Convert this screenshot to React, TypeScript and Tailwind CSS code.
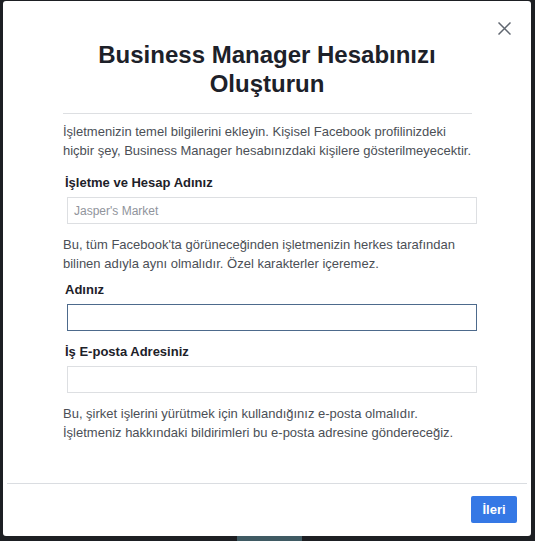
import React from "react";

const CloseIcon = () => (
  <svg width="13" height="13" viewBox="0 0 13 13" fill="none">
    <path d="M0.5 0.5L12.5 12.5M12.5 0.5L0.5 12.5" stroke="#606770" strokeWidth="1.5" />
  </svg>
);

type FieldProps = {
  label: string;
  placeholder?: string;
  focused?: boolean;
  className?: string;
};

const Field: React.FC<FieldProps> = ({ label, placeholder, focused, className }) => (
  <div className={className}>
    <div className="ml-[2px] text-[13px] leading-[19px] font-bold text-[#1d2129]">{label}</div>
    <div
      className={`mt-[5px] ml-[4px] w-[410px] h-[27px] border bg-white flex items-center pl-[6px] text-[12px] text-[#90949c] ${
        focused ? "border-[#4d6a8c]" : "border-[#dddfe2]"
      }`}
    >
      {placeholder}
    </div>
  </div>
);

export default function App() {
  return (
    <div
      className="w-[535px] h-[541px] bg-[#1d1f23] pl-[3px] pt-[1px] overflow-hidden"
      style={{ fontFamily: '"Liberation Sans", Arial, sans-serif' }}
    >
      <div className="relative w-[528px] h-[535px] bg-white rounded-[3px] flex flex-col">
        <button className="absolute left-[495px] top-[21px]" aria-label="Kapat">
          <CloseIcon />
        </button>

        <div className="flex-1 pt-[39px]">
          <h1 className="text-center text-[24px] leading-[29px] font-bold text-[#1d2129]">
            Business Manager Hesabınızı
            <br />
            Oluşturun
          </h1>

          <div className="pl-[60px] pr-[54px]">
            <div className="mt-[15px] w-[409px] h-px bg-[#dddfe2]" />

            <p className="mt-[8px] text-[13px] leading-[19px] text-[#4b4f56]">
              İşletmenizin temel bilgilerini ekleyin. Kişisel Facebook profilinizdeki hiçbir şey, Business
              Manager hesabınızdaki kişilere gösterilmeyecektir.
            </p>

            <Field className="mt-[13px]" label="İşletme ve Hesap Adınız" placeholder="Jasper's Market" />

            <p className="mt-[11px] text-[13px] leading-[19px] text-[#4b4f56]">
              Bu, tüm Facebook'ta görüneceğinden işletmenizin herkes tarafından
              <br />
              bilinen adıyla aynı olmalıdır. Özel karakterler içeremez.
            </p>

            <Field className="mt-[7px]" label="Adınız" focused />

            <Field className="mt-[11px]" label="İş E-posta Adresiniz" />

            <p className="mt-[11px] text-[13px] leading-[19px] text-[#4b4f56]">
              Bu, şirket işlerini yürütmek için kullandığınız e-posta olmalıdır.
              <br />
              İşletmeniz hakkındaki bildirimleri bu e-posta adresine göndereceğiz.
            </p>
          </div>
        </div>

        <div className="mx-[4px] h-px bg-[#dadde1]" />
        <div className="flex justify-end pt-[12px] pb-[13px] pr-[14px]">
          <button className="w-[46px] h-[27px] rounded-[2px] bg-[#3578e5] text-white text-[13px] font-bold">
            İleri
          </button>
        </div>
      </div>
      <div className="ml-[234px] w-[65px] h-[5px] bg-[#3f5a63]" />
    </div>
  );
}
